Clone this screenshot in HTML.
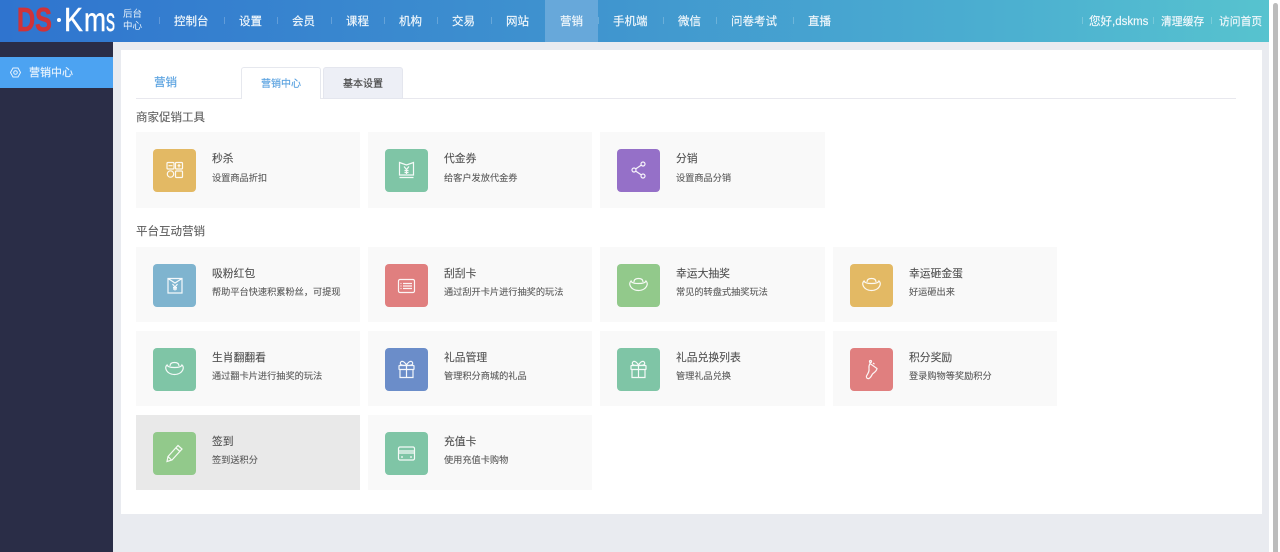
<!DOCTYPE html>
<html lang="zh"><head><meta charset="utf-8"><title>营销</title>
<style>
*{box-sizing:border-box}
html,body{margin:0;padding:0;width:1280px;height:552px;overflow:hidden;background:#fff;font-family:"Liberation Sans","Noto Sans CJK SC",sans-serif}
#stage{position:absolute;left:0;top:0;width:1269px;height:552px;background:#e9ebf0;filter:blur(.3px)}
#head{position:absolute;left:0;top:0;width:1269px;height:42px;background:linear-gradient(90deg,#2f74cf 0%,#3f93cf 45%,#4cb0d0 80%,#57c3cf 100%)}
.nav{position:absolute;top:15px;font-size:11.5px;line-height:15px;color:#f2f8fc;white-space:nowrap;-webkit-text-stroke:.15px #f2f8fc}
.sep{position:absolute;top:17px;width:1px;height:7px;background:rgba(255,255,255,.22)}
#active{position:absolute;left:545px;top:0;width:53px;height:42px;background:#67a8da}
#side{position:absolute;left:0;top:42px;width:113px;height:510px;background:#2a2d47}
#sideitem{position:absolute;left:0;top:15px;width:113px;height:31px;background:#4ca3f2;color:#eaf4fd;font-size:11px;line-height:32px;padding-left:29px;-webkit-text-stroke:.15px #eaf4fd}
#main{position:absolute;left:121px;top:50px;width:1141px;height:464px;background:#fff}
.h{position:absolute;left:136px;font-size:11.500px;line-height:16px;color:#5c5c5c;-webkit-text-stroke:.1px #5c5c5c}
.c{position:absolute;width:224px;height:76px;background:#f9f9f9}
.c.on{background:#e9e9e9}
.c.r{height:75.500px}
.i{position:absolute;left:17px;top:17px;width:43px;height:43px;border-radius:4px}
.i svg{position:absolute;left:0;top:0;width:43px;height:43px;fill:none;stroke:#fff;stroke-width:1.2;opacity:.92}
.t{position:absolute;left:76px;top:20px;font-size:10.800px;line-height:15px;color:#4f4f4f;white-space:nowrap;-webkit-text-stroke:.1px #4f4f4f}
.d{position:absolute;left:76px;top:40px;font-size:9.200px;line-height:13px;color:#5a5a5a;white-space:nowrap;-webkit-text-stroke:.1px #5a5a5a}
.r .t{top:20.500px}
.r .d{top:39.500px}
.lg{position:absolute;top:2px;font-size:33px;line-height:36px;white-space:nowrap;transform-origin:left}
#sb{position:absolute;left:1273px;top:3px;width:5px;height:549px;background:#bcbcbc;border-radius:3px 3px 0 0}
</style></head><body>
<div id="stage">
<div id="head">
<div class="lg" style="left:17px;font-weight:700;color:#cf3339;transform:scaleX(.76);-webkit-text-stroke:.7px #cf3339">DS</div>
<div style="position:absolute;left:57px;top:18px;width:4px;height:4px;border-radius:2px;background:#fff"></div>
<div class="lg" style="left:64px;color:#fff;transform:scaleX(.86);-webkit-text-stroke:.4px #fff">K</div>
<div class="lg" style="left:84px;color:#fff;transform:scaleX(.8);-webkit-text-stroke:.4px #fff">m</div>
<div class="lg" style="left:106px;color:#fff;transform:scaleX(.55);-webkit-text-stroke:.4px #fff">s</div>
<div style="position:absolute;left:123px;top:9px;font-size:9.500px;line-height:12px;color:#eaf3fb;width:20px">后台<br>中心</div>
<div id="active"></div>
<i class="sep" style="left:159px"></i><span class="nav" style="left:174px">控制台</span>
<i class="sep" style="left:224px"></i><span class="nav" style="left:239px">设置</span>
<i class="sep" style="left:277px"></i><span class="nav" style="left:292px">会员</span>
<i class="sep" style="left:331px"></i><span class="nav" style="left:346px">课程</span>
<i class="sep" style="left:384px"></i><span class="nav" style="left:399px">机构</span>
<i class="sep" style="left:437px"></i><span class="nav" style="left:452px">交易</span>
<i class="sep" style="left:491px"></i><span class="nav" style="left:506px">网站</span>
<span class="nav" style="left:560px">营销</span>
<i class="sep" style="left:598px"></i><span class="nav" style="left:613px">手机端</span>
<i class="sep" style="left:663px"></i><span class="nav" style="left:678px">微信</span>
<i class="sep" style="left:716px"></i><span class="nav" style="left:731px">问卷考试</span>
<i class="sep" style="left:793px"></i><span class="nav" style="left:808px">直播</span>
<i class="sep" style="left:1082px"></i><span class="nav" style="left:1089px;font-size:11.500px">您好,dskms</span>
<i class="sep" style="left:1153px"></i><span class="nav" style="left:1161px;font-size:10.800px">清理缓存</span>
<i class="sep" style="left:1211px"></i><span class="nav" style="left:1219px;font-size:10.800px">访问首页</span>
</div>
<div id="side"><div id="sideitem">营销中心
<svg style="position:absolute;left:10px;top:10px" width="11" height="11" viewBox="0 0 11 11" fill="none" stroke="#e8f3fd" stroke-width="1"><path d="M3 1h5l2.500 4.500L8 10H3L.5 5.500z"/><circle cx="5.500" cy="5.500" r="1.800"/></svg></div></div>
<div id="main"></div>
<div style="position:absolute;left:136px;top:98px;width:1100px;height:1px;background:#e8e8ee"></div>
<div style="position:absolute;left:154px;top:75px;font-size:11.500px;line-height:16px;color:#5aa2e0;-webkit-text-stroke:.15px #5aa2e0">营销</div>
<div style="position:absolute;left:241px;top:67px;width:80px;height:32px;background:#fff;border:1px solid #e6e8ee;border-bottom:0;border-radius:3px 3px 0 0;text-align:center;font-size:10px;line-height:33px;color:#5aa2e0;-webkit-text-stroke:.15px #5aa2e0">营销中心</div>
<div style="position:absolute;left:323px;top:67px;width:80px;height:32px;background:#edeff6;border:1px solid #e4e6ee;border-radius:3px 3px 0 0;text-align:center;font-size:10px;line-height:33px;color:#444;-webkit-text-stroke:.15px #444">基本设置</div>

<div class="h" style="top:110px">商家促销工具</div>
<div class="h" style="top:224px">平台互动营销</div>

<div class="c" style="left:136px;top:132px"><div class="i" style="background:#e3b964"><svg viewBox="0 0 43 43"><rect x="14" y="13.500" width="7" height="6.500" rx="1"/><rect x="22.500" y="13.500" width="7" height="6.500" rx="1"/><circle cx="17.500" cy="25" r="3.200"/><rect x="22.500" y="22" width="7" height="6.500" rx="1"/><path d="M15.500 16.700h4M26 15v3.500M24.500 16.700h3"/></svg></div><div class="t">秒杀</div><div class="d">设置商品折扣</div></div>
<div class="c" style="left:368px;top:132px"><div class="i" style="background:#7fc5a6"><svg viewBox="0 0 43 43"><path d="M14.500 13.500l7 2.500 7-2.500v12.500h-14zM14.500 28.500h14" /><path d="M19 17.500l2.500 3 2.500-3M21.500 20.500V25M19.500 21.500h4M19.500 23.500h4"/></svg></div><div class="t">代金券</div><div class="d">给客户发放代金券</div></div>
<div class="c" style="left:600px;top:132px;width:225px"><div class="i" style="background:#9570c8"><svg viewBox="0 0 43 43"><circle cx="26" cy="15" r="2"/><circle cx="17" cy="21" r="2"/><circle cx="26" cy="27" r="2"/><path d="M18.700 19.900l5.600-3.800M18.700 22.100l5.600 3.800"/></svg></div><div class="t">分销</div><div class="d">设置商品分销</div></div>

<div class="c r" style="left:136px;top:246.500px"><div class="i" style="background:#7fb4cf"><svg viewBox="0 0 43 43"><path d="M15 14.500h14v14.500h-14zM15 14.500l7 4.500 7-4.500"/><path d="M19.500 20l2.500 3 2.500-3M22 23v3.500M20 23.500h4M20 25h4"/></svg></div><div class="t">吸粉红包</div><div class="d">帮助平台快速积累粉丝，可提现</div></div>
<div class="c r" style="left:368px;top:246.500px"><div class="i" style="background:#e07f7f"><svg viewBox="0 0 43 43"><rect x="13.500" y="15.500" width="16" height="13" rx="1.500"/><path d="M18 19.500h9M18 22h9M18 24.500h9M15.500 19.500h1M15.500 22h1M15.500 24.500h1"/></svg></div><div class="t">刮刮卡</div><div class="d">通过刮开卡片进行抽奖的玩法</div></div>
<div class="c r" style="left:600px;top:246.500px;width:225px"><div class="i" style="background:#92c98b"><svg viewBox="0 0 43 43"><path d="M17 18c0-2.500 1.800-3.500 4.500-3.500s4.500 1 4.500 3.500"/><path d="M14 17c-1 1-1.500 2-1.200 3.500C13.500 24 17 26.500 21.500 26.500s8-2.500 8.700-6c.3-1.500-.2-2.500-1.200-3.500-.5 1.500-3 2.500-7.500 2.500S14.500 18.500 14 17z"/></svg></div><div class="t">幸运大抽奖</div><div class="d">常见的转盘式抽奖玩法</div></div>
<div class="c r" style="left:832.500px;top:246.500px;width:224.500px"><div class="i" style="background:#e3b964"><svg viewBox="0 0 43 43"><path d="M17 18c0-2.500 1.800-3.500 4.500-3.500s4.500 1 4.500 3.500"/><path d="M14 17c-1 1-1.500 2-1.200 3.500C13.500 24 17 26.500 21.500 26.500s8-2.500 8.700-6c.3-1.500-.2-2.500-1.200-3.500-.5 1.500-3 2.500-7.500 2.500S14.500 18.500 14 17z"/></svg></div><div class="t" style="left:76.500px">幸运砸金蛋</div><div class="d" style="left:76.500px">好运砸出来</div></div>

<div class="c r" style="left:136px;top:330.500px"><div class="i" style="background:#7fc5a6"><svg viewBox="0 0 43 43"><path d="M17 18c0-2.500 1.800-3.500 4.500-3.500s4.500 1 4.500 3.500"/><path d="M14 17c-1 1-1.500 2-1.200 3.500C13.500 24 17 26.500 21.500 26.500s8-2.500 8.700-6c.3-1.500-.2-2.500-1.200-3.500-.5 1.500-3 2.500-7.500 2.500S14.500 18.500 14 17z"/></svg></div><div class="t">生肖翻翻看</div><div class="d">通过翻卡片进行抽奖的玩法</div></div>
<div class="c r" style="left:368px;top:330.500px"><div class="i" style="background:#6b8dc9"><svg viewBox="0 0 43 43"><rect x="14" y="17.500" width="15" height="4" rx=".5"/><path d="M15 21.500v8h13v-8M21.500 17.500v12M21.500 17.500c-1-3-3.500-4.500-5-4-1.500.6-1.500 2.500-.5 3.200.8.600 2.500.8 5.500.8zM21.500 17.500c1-3 3.500-4.500 5-4 1.500.6 1.500 2.500.5 3.200-.8.600-2.500.8-5.500.8z"/></svg></div><div class="t">礼品管理</div><div class="d">管理积分商城的礼品</div></div>
<div class="c r" style="left:600px;top:330.500px;width:225px"><div class="i" style="background:#7fc5a6"><svg viewBox="0 0 43 43"><rect x="14" y="17.500" width="15" height="4" rx=".5"/><path d="M15 21.500v8h13v-8M21.500 17.500v12M21.500 17.500c-1-3-3.500-4.500-5-4-1.500.6-1.500 2.500-.5 3.200.8.600 2.500.8 5.500.8zM21.500 17.500c1-3 3.500-4.500 5-4 1.500.6 1.500 2.500.5 3.200-.8.600-2.500.8-5.500.8z"/></svg></div><div class="t">礼品兑换列表</div><div class="d">管理礼品兑换</div></div>
<div class="c r" style="left:832.500px;top:330.500px;width:224.500px"><div class="i" style="background:#e07f7f"><svg viewBox="0 0 43 43"><path d="M20 15.500l7 5c-.5 3-3 4-4.500 5.500-1 1.500-1.500 3.500-3.500 4.500-2 .5-3-1-2.500-2.500 1.500-2.500 3-4.500 2.500-7.500-.2-1.500-.2-3 1-5z"/><circle cx="20.500" cy="13.500" r="1"/><path d="M23 15l1.500 1.200"/></svg></div><div class="t" style="left:76.500px">积分奖励</div><div class="d" style="left:76.500px">登录购物等奖励积分</div></div>

<div class="c on r" style="left:136px;top:414.500px"><div class="i" style="background:#92c98b"><svg viewBox="0 0 43 43"><path d="M25 13.500l4 3.500-10 11-5 1.500 1-5zM23 16l4 3.500M15 24.500l3.500 3.500"/></svg></div><div class="t">签到</div><div class="d">签到送积分</div></div>
<div class="c r" style="left:368px;top:414.500px"><div class="i" style="background:#7fc5a6"><svg viewBox="0 0 43 43"><rect x="13.500" y="15" width="16" height="13" rx="1.500"/><path d="M13.500 19h16M13.500 21h16M16 25h2M25 25h2"/></svg></div><div class="t">充值卡</div><div class="d">使用充值卡购物</div></div>
</div>
<div id="sb"></div>
</body></html>
